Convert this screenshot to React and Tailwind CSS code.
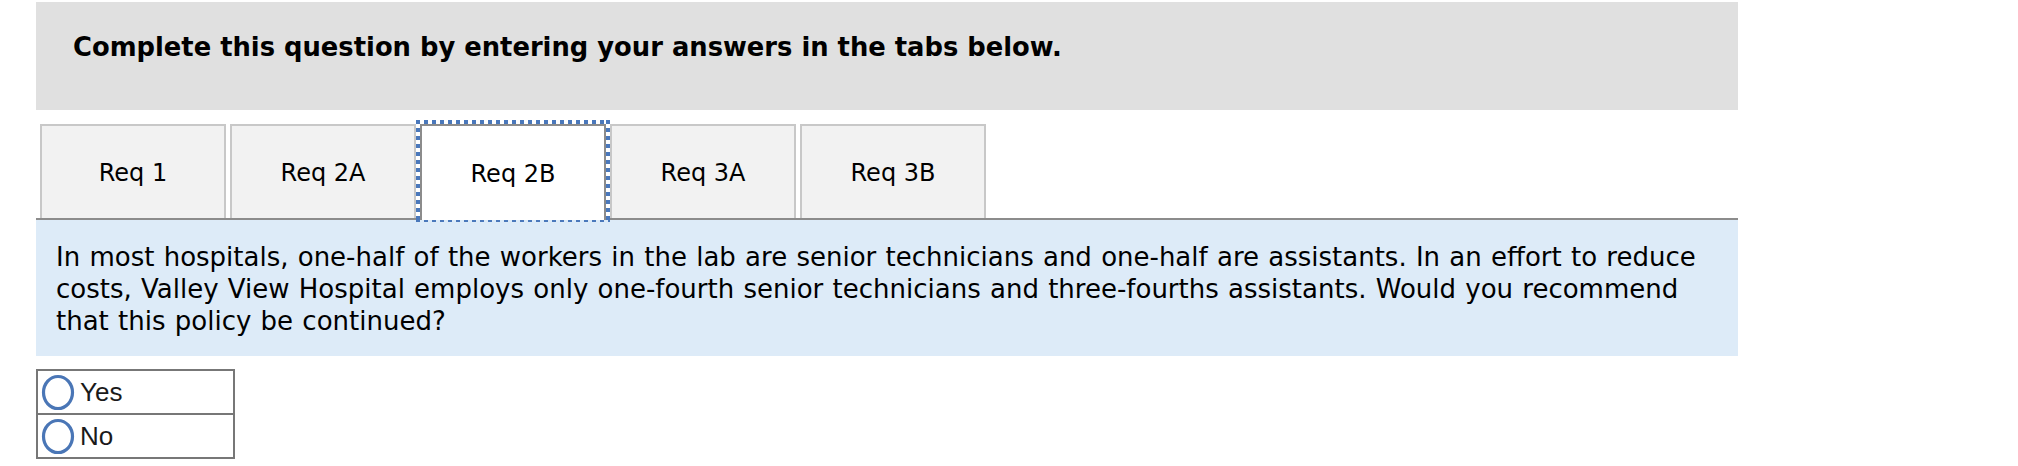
import React from "react";

const tabs = ["Req 1", "Req 2A", "Req 2B", "Req 3A", "Req 3B"];

function Radio() {
  return (
    <svg width="34" height="37" viewBox="0 0 34 37" className="shrink-0">
      <ellipse cx="17" cy="18.5" rx="14.5" ry="16" fill="white" stroke="#4a76b6" strokeWidth="3.2" />
    </svg>
  );
}

export default function App() {
  return (
    <div className="w-[2018px] h-[466px] bg-white pt-[2px] pl-[36px] overflow-hidden" style={{ fontFamily: "'DejaVu Sans', Verdana, sans-serif" }}>
      <div className="w-[1702px]">
        <div className="h-[108px] bg-[#e0e0e0] pl-[37px] pt-[30px]">
          <div className="text-[25.8px] leading-[30px] font-bold text-black whitespace-nowrap">
            Complete this question by entering your answers in the tabs below.
          </div>
        </div>
        <div className="mt-[14px] flex gap-[4px] pl-[4px] h-[96px] border-b-2 border-[#8c8c8c] items-start">
          {tabs.map((t, i) =>
            i === 2 ? (
              <div key={t} className="relative w-[186px] h-[96px] bg-white border-2 border-b-0 border-[#8c8c8c] flex items-center justify-center pt-[2px] text-[24px] text-black z-10">
                {t}
                <svg className="absolute left-[-6px] top-[-6px] w-[194px] h-[102px] pointer-events-none" viewBox="0 0 194 102">
                  <line x1="0" y1="2" x2="194" y2="2" stroke="#4a78bb" strokeWidth="4" strokeDasharray="4 4" />
                  <line x1="2" y1="0" x2="2" y2="102" stroke="#4a78bb" strokeWidth="4" strokeDasharray="4 4" />
                  <line x1="192" y1="0" x2="192" y2="102" stroke="#4a78bb" strokeWidth="4" strokeDasharray="4 4" />
                  <line x1="0" y1="101" x2="194" y2="101" stroke="#4a78bb" strokeWidth="2" strokeDasharray="4 4" />
                </svg>
              </div>
            ) : (
              <div key={t} className="w-[186px] h-[94px] bg-[#f2f2f2] border-2 border-b-0 border-[#c8c8c8] flex items-center justify-center pt-[2px] text-[24px] text-black">
                {t}
              </div>
            )
          )}
        </div>
        <div className="bg-[#ddebf8] pl-[20px] pr-[20px] pt-[21px] pb-[19px] text-[26px] leading-[32px] text-black whitespace-nowrap [word-spacing:1px]">
          In most hospitals, one-half of the workers in the lab are senior technicians and one-half are assistants. In an effort to reduce
          <br />
          costs, Valley View Hospital employs only one-fourth senior technicians and three-fourths assistants. Would you recommend
          <br />
          that this policy be continued?
        </div>
        <div className="mt-[13px] w-[199px] border-2 border-[#777777]" style={{ fontFamily: "'Liberation Sans', Arial, sans-serif" }}>
          <div className="h-[44px] flex items-center pl-[3px] gap-[5px] border-b-2 border-[#777777] text-[26px] text-[#1a1a1a]">
            <Radio />
            <span>Yes</span>
          </div>
          <div className="h-[42px] flex items-center pl-[3px] gap-[5px] text-[26px] text-[#1a1a1a]">
            <Radio />
            <span>No</span>
          </div>
        </div>
      </div>
    </div>
  );
}
